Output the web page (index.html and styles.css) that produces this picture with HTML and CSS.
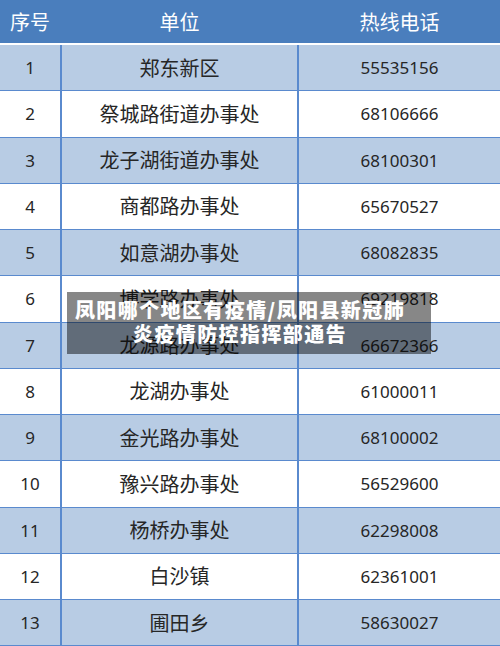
FILE: index.html
```html
<!DOCTYPE html>
<html lang="zh-CN">
<head>
<meta charset="utf-8">
<link rel="stylesheet" href="styles.css">
</head>
<body>
<div class="page">
  <div class="table">
    <div class="row head">
      <div class="cell c1">序号</div>
      <div class="cell c2">单位</div>
      <div class="cell c3">热线电话</div>
    </div>
    <div class="gap"></div>
    <div class="row alt"><div class="cell c1 num">1</div><div class="cell c2">郑东新区</div><div class="cell c3 num">55535156</div></div>
    <div class="row"><div class="cell c1 num">2</div><div class="cell c2">祭城路街道办事处</div><div class="cell c3 num">68106666</div></div>
    <div class="row alt"><div class="cell c1 num">3</div><div class="cell c2">龙子湖街道办事处</div><div class="cell c3 num">68100301</div></div>
    <div class="row"><div class="cell c1 num">4</div><div class="cell c2">商都路办事处</div><div class="cell c3 num">65670527</div></div>
    <div class="row alt"><div class="cell c1 num">5</div><div class="cell c2">如意湖办事处</div><div class="cell c3 num">68082835</div></div>
    <div class="row"><div class="cell c1 num">6</div><div class="cell c2">博学路办事处</div><div class="cell c3 num">69219818</div></div>
    <div class="row alt"><div class="cell c1 num">7</div><div class="cell c2">龙源路办事处</div><div class="cell c3 num">66672366</div></div>
    <div class="row"><div class="cell c1 num">8</div><div class="cell c2">龙湖办事处</div><div class="cell c3 num">61000011</div></div>
    <div class="row alt"><div class="cell c1 num">9</div><div class="cell c2">金光路办事处</div><div class="cell c3 num">68100002</div></div>
    <div class="row"><div class="cell c1 num">10</div><div class="cell c2">豫兴路办事处</div><div class="cell c3 num">56529600</div></div>
    <div class="row alt"><div class="cell c1 num">11</div><div class="cell c2">杨桥办事处</div><div class="cell c3 num">62298008</div></div>
    <div class="row"><div class="cell c1 num">12</div><div class="cell c2">白沙镇</div><div class="cell c3 num">62361001</div></div>
    <div class="row alt"><div class="cell c1 num">13</div><div class="cell c2">圃田乡</div><div class="cell c3 num">58630027</div></div>
  </div>
  <div class="caption">凤阳哪个地区有疫情/凤阳县新冠肺<br>炎疫情防控指挥部通告</div>
</div>
</body>
</html>
```

FILE: styles.css
```css
html, body {
  margin: 0;
  padding: 0;
  background: #ffffff;
}
.page {
  position: relative;
  width: 500px;
  height: 646px;
  overflow: hidden;
  font-family: "Noto Sans CJK SC", "Noto Sans", sans-serif;
}
.table {
  display: flex;
  flex-direction: column;
  width: 500px;
}
.row {
  display: flex;
  height: 45.25px;
  border-bottom: 1px solid #5a8ace;
  background: #ffffff;
  color: #262626;
  font-size: 20px;
}
.row.alt {
  background: #b8cce4;
}
.row.head {
  height: 43px;
  border-bottom: none;
  background: #4a7ebd;
  color: #ffffff;
}
.gap {
  height: 2px;
  background: #ffffff;
}
.cell {
  display: flex;
  align-items: center;
  justify-content: center;
  line-height: 1;
}
.c1 {
  width: 60px;
  border-right: 2px solid #5a8ace;
}
.c2 {
  width: 235px;
  border-right: 2px solid #5a8ace;
}
.c3 {
  flex: 1;
}
.head .c1, .head .c2 {
  border-right-color: #4a7ebd;
}
.num {
  font-family: "Noto Sans", sans-serif;
  font-size: 17px;
}
.caption {
  position: absolute;
  left: 67px;
  top: 292px;
  width: 336px;
  height: 56px;
  padding: 6px 23px 0 5px;
  background: rgba(0, 0, 0, 0.47);
  color: #ffffff;
  font-family: "Noto Sans CJK SC", sans-serif;
  font-weight: 900;
  font-size: 20px;
  letter-spacing: 1.4px;
  line-height: 24px;
  text-align: center;
  white-space: nowrap;
}
```
